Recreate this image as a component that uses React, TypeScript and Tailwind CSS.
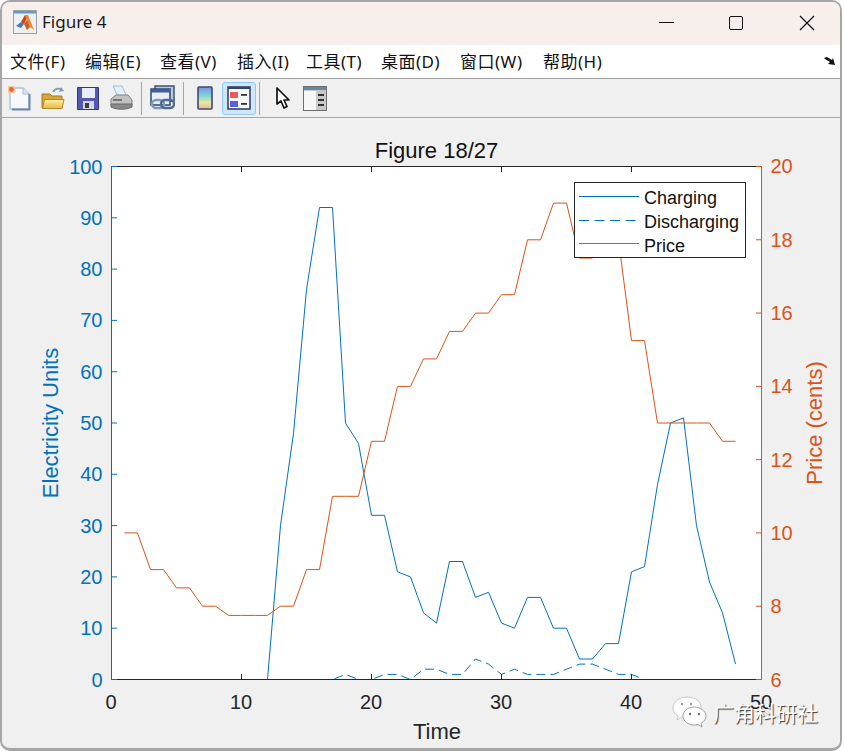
import React from "react";

const chargeVals = [0,0,0,0,0,0,0,0,0,0,0,0,30,48,76,92,92,50,46,32,32,21,20,13,11,23,23,16,17,11,10,16,16,10,10,4,4,7,7,21,22,38,50,51,30,19,13,3];
const dischargeVals = [0,0,0,0,0,0,0,0,0,0,0,0,0,0,0,0,0,1,0,0,1,1,0,2,2,1,1,4,3,1,2,1,1,1,2,3,3,2,1,1,0,0,0,0,0,0,0,0];
const priceVals = [10,10,9,9,8.5,8.5,8,8,7.75,7.75,7.75,7.75,8,8,9,9,11,11,11,12.5,12.5,14,14,14.75,14.75,15.5,15.5,16,16,16.5,16.5,18,18,19,19,17.5,17.5,18,18,15.25,15.25,13,13,13,13,13,12.5,12.5];

const X = (t: number) => 111.5 + t * 13;
const YL = (v: number) => 679.5 - v * 5.13;
const YR = (v: number) => 679.5 - (v - 6) * 36.643;

const line = (vals: number[], y: (v: number) => number) =>
  vals.map((v, i) => `${X(i + 1).toFixed(1)},${y(v).toFixed(1)}`).join(" ");

const BLUE = "#0072BD";
const ORANGE = "#D95319";
const DARK = "#262626";

function Chart() {
  const xt = [0, 10, 20, 30, 40, 50];
  const yl = [0, 10, 20, 30, 40, 50, 60, 70, 80, 90, 100];
  const yr = [6, 8, 10, 12, 14, 16, 18, 20];
  return (
    <svg
      viewBox="2 118 838 630"
      width="838"
      height="630"
      className="block [font-family:'Liberation_Sans',Arial,sans-serif]"
    >
      <rect x="111.5" y="166.5" width="650" height="513" fill="#ffffff" />
      <polyline points={line(chargeVals, YL)} fill="none" stroke={BLUE} strokeWidth="1" strokeLinejoin="round" />
      <polyline points={line(dischargeVals, YL)} fill="none" stroke={BLUE} strokeWidth="1" strokeDasharray="9 5" />
      <polyline points={line(priceVals, YR)} fill="none" stroke={ORANGE} strokeWidth="1" strokeLinejoin="round" />

      <line x1="111.5" y1="166.5" x2="761.5" y2="166.5" stroke={DARK} />
      <line x1="111.5" y1="679.5" x2="761.5" y2="679.5" stroke={DARK} />
      {xt.map((t) => (
        <g key={t}>
          <line x1={X(t)} y1="679.5" x2={X(t)} y2="674" stroke={DARK} />
          <line x1={X(t)} y1="166.5" x2={X(t)} y2="172" stroke={DARK} />
          <text x={X(t) - 0.5} y="709" textAnchor="middle" fontSize="20" fill={DARK}>{t}</text>
        </g>
      ))}
      <line x1="111.5" y1="166" x2="111.5" y2="680" stroke={BLUE} />
      {yl.map((v) => (
        <g key={v}>
          <line x1="111.5" y1={YL(v)} x2="117" y2={YL(v)} stroke={BLUE} />
          <text x="102.5" y={YL(v) + 7} textAnchor="end" fontSize="20" fill={BLUE}>{v}</text>
        </g>
      ))}
      <line x1="761.5" y1="166" x2="761.5" y2="680" stroke={ORANGE} />
      {yr.map((v) => (
        <g key={v}>
          <line x1="756" y1={YR(v)} x2="761.5" y2={YR(v)} stroke={ORANGE} />
          <text x="770.5" y={YR(v) + 7} fontSize="20" fill={ORANGE}>{v}</text>
        </g>
      ))}

      <text x="436.5" y="157.5" textAnchor="middle" fontSize="22" fill="#111">Figure 18/27</text>
      <text x="437" y="739" textAnchor="middle" fontSize="22" fill={DARK}>Time</text>
      <text transform="translate(58 423) rotate(-90)" textAnchor="middle" fontSize="22" fill={BLUE}>Electricity Units</text>
      <text transform="translate(822 423) rotate(-90)" textAnchor="middle" fontSize="22" fill={ORANGE}>Price (cents)</text>

      <rect x="574.5" y="182.5" width="171" height="75" fill="#fff" stroke={DARK} />
      <line x1="579" y1="196.5" x2="639" y2="196.5" stroke={BLUE} />
      <line x1="579" y1="220.5" x2="639" y2="220.5" stroke={BLUE} strokeDasharray="10 5.5" />
      <line x1="579" y1="243.5" x2="639" y2="243.5" stroke={ORANGE} />
      <text x="644" y="204" fontSize="18" fill="#111">Charging</text>
      <text x="644" y="228" fontSize="18" fill="#111">Discharging</text>
      <text x="644" y="252" fontSize="18" fill="#111">Price</text>
    </svg>
  );
}

function AppIcon() {
  return (
    <svg width="24" height="24" viewBox="0 0 24 24" className="shrink-0">
      <rect x="0.5" y="0.5" width="23" height="23" fill="#eef1f4" stroke="#9aa0a6" />
      <rect x="1" y="1" width="22" height="2.5" fill="#5f9ccc" />
      <polygon points="3,16 8,12 11,14 8,18" fill="#3d7fc4" />
      <polygon points="8,12 12,5 14,8 11,14" fill="#c8421c" />
      <polygon points="12,5 15,5 21,20 17,17 14,11" fill="#ef8a2a" />
      <polygon points="11,14 14,10 17,17 14,20" fill="#d65a1e" />
    </svg>
  );
}

function NewIcon() {
  return (
    <svg width="24" height="26" viewBox="0 0 24 26" className="shrink-0">
      <path d="M3 3h13l6 6v15H3z" fill="#f6faff" stroke="#a9c0de" strokeWidth="1.4" />
      <path d="M16 3v6h6" fill="#d8e6f6" stroke="#a9bcd4" />
      <path d="M22.500 9v15.500H5" fill="none" stroke="#6f86ab" strokeWidth="2" />
      <rect x="1" y="1" width="7" height="7" fill="#f6c69a" />
      <circle cx="4.500" cy="4.500" r="2.400" fill="#e8663c" />
    </svg>
  );
}

function OpenIcon() {
  return (
    <svg width="24" height="26" viewBox="0 0 24 26" className="shrink-0">
      <defs>
        <linearGradient id="fold" x1="0" y1="0" x2="0" y2="1">
          <stop offset="0" stopColor="#fff0a0" />
          <stop offset="1" stopColor="#e8b848" />
        </linearGradient>
      </defs>
      <path d="M12 7c2-4 6-4 9-2" fill="none" stroke="#7f9bb5" strokeWidth="1.800" />
      <path d="M20 2l3 4-5 1z" fill="#7f9bb5" />
      <path d="M1 23V9h8l2 2h10v12z" fill="#d8a53b" stroke="#a27a24" />
      <path d="M1.500 23.500l2-9h19.500l-2 9z" fill="url(#fold)" stroke="#b08a2c" />
    </svg>
  );
}

function SaveIcon() {
  return (
    <svg width="24" height="26" viewBox="0 0 24 26" className="shrink-0">
      <path d="M1.500 2.500h21v22h-21z" fill="#5358b4" stroke="#33387e" />
      <rect x="6" y="3" width="13" height="10" fill="#e8ebf8" />
      <rect x="7" y="16" width="11" height="8" fill="#d8d8e4" />
      <rect x="9" y="18" width="4" height="5" fill="#3a3a4a" />
    </svg>
  );
}

function PrintIcon() {
  return (
    <svg width="23" height="26" viewBox="0 0 23 26" className="shrink-0">
      <path d="M3 1h9l5 11H8z" fill="#e4eef8" stroke="#a8bccc" />
      <path d="M1 14l5-4h12l4 5v5H1z" fill="#c2c2c2" stroke="#808080" />
      <path d="M1 19h21v3c-6 3-15 3-21 0z" fill="#8a8a8a" stroke="#666" />
      <rect x="3" y="14" width="9" height="2" fill="#777" />
    </svg>
  );
}

function LinkIcon() {
  return (
    <svg width="25" height="26" viewBox="0 0 25 26" className="shrink-0">
      <rect x="5" y="1" width="19" height="15" fill="#b9cbe2" stroke="#3f5375" strokeWidth="1.500" />
      <rect x="1" y="4" width="19" height="16" fill="#e6eef8" stroke="#2f4570" strokeWidth="1.500" />
      <rect x="1" y="4" width="19" height="3.500" fill="#3f5f94" />
      <rect x="2" y="15" width="12" height="8" rx="4" fill="none" stroke="#7f9ab8" strokeWidth="2.400" />
      <rect x="11" y="15" width="13" height="8" rx="4" fill="none" stroke="#4d6a90" strokeWidth="2.400" />
    </svg>
  );
}

function ColorbarIcon() {
  return (
    <svg width="16" height="24" viewBox="0 0 16 24" className="shrink-0">
      <defs>
        <linearGradient id="cb" x1="0" y1="0" x2="0" y2="1">
          <stop offset="0" stopColor="#7f8fe0" />
          <stop offset="0.4" stopColor="#80d4dc" />
          <stop offset="0.7" stopColor="#e4e8a0" />
          <stop offset="1" stopColor="#f2b890" />
        </linearGradient>
      </defs>
      <rect x="1" y="1" width="14" height="22" rx="1" fill="url(#cb)" stroke="#3c4a78" strokeWidth="1.600" />
    </svg>
  );
}

function LegendIcon() {
  return (
    <svg width="24" height="24" viewBox="0 0 24 24" className="shrink-0">
      <rect x="1" y="1" width="22" height="22" fill="#f6f7fa" stroke="#34426e" strokeWidth="1.600" />
      <rect x="1" y="1" width="22" height="2" fill="#34426e" />
      <rect x="3" y="6" width="8" height="6" fill="#e85a5e" />
      <rect x="3" y="15" width="8" height="6" fill="#5a5fe0" />
      <rect x="14" y="8" width="6" height="1.800" fill="#333" />
      <rect x="14" y="17" width="6" height="1.800" fill="#333" />
    </svg>
  );
}

function ArrowIcon() {
  return (
    <svg width="14" height="23" viewBox="0 0 14 23" className="shrink-0">
      <path d="M1 1v16l4-3 3 7 3-1.500-3-6.500h5z" fill="#fff" stroke="#111" strokeWidth="1.700" strokeLinejoin="round" />
    </svg>
  );
}

function BrowserIcon() {
  return (
    <svg width="24" height="25" viewBox="0 0 24 25" className="shrink-0">
      <rect x="0.500" y="0.500" width="23" height="24" fill="#c9c9c9" stroke="#6e6e6e" />
      <rect x="1" y="1" width="22" height="3" fill="#5f8aa8" />
      <rect x="1" y="5" width="12" height="19" fill="#f7f7f7" />
      <rect x="15" y="8" width="6" height="2" fill="#333" />
      <rect x="15" y="13" width="6" height="2" fill="#333" />
      <rect x="15" y="18" width="6" height="2" fill="#333" />
    </svg>
  );
}

function Sep() {
  return <div className="h-[33px] w-px bg-[#a6a6a6] shrink-0" />;
}

function Watermark() {
  return (
    <div className="absolute left-[669px] top-[578px] flex items-center">
      <svg width="36" height="32" viewBox="0 0 36 32" className="shrink-0">
        <path d="M16 1C8 1 2 6 2 12c0 4 2 6 5 8l-1 4 5-3c2 .6 4 .6 5 .6C24 21.600 30 17 30 11 30 5 24 1 16 1z" fill="#ffffff" stroke="#bdbdbd" strokeWidth="0.800" />
        <path d="M23 11c-6 0-11 4-11 9s5 9 11 9c1.500 0 2.500 0 4-.6l4 2.600-1-3.600c3-2 5-4 5-7.400 0-5-6-9-12-9z" fill="#ffffff" stroke="#8a8a8a" strokeWidth="0.800" />
        <circle cx="11" cy="8" r="1.200" fill="#9a9a9a" />
        <circle cx="20" cy="8" r="1.200" fill="#9a9a9a" />
        <circle cx="19" cy="18" r="1.200" fill="#6a6a6a" />
        <circle cx="28" cy="18" r="1.200" fill="#6a6a6a" />
      </svg>
      <span className="ml-[6px] text-[21px] leading-none whitespace-nowrap text-white [font-family:'Noto_Sans_CJK_SC',sans-serif] [text-shadow:1px_1px_1px_#333]">
        广角科研社
      </span>
    </div>
  );
}

const menus: [string, string][] = [
  ["文件(F)", "w-[75px]"],
  ["编辑(E)", "w-[75px]"],
  ["查看(V)", "w-[77px]"],
  ["插入(I)", "w-[69px]"],
  ["工具(T)", "w-[75px]"],
  ["桌面(D)", "w-[79px]"],
  ["窗口(W)", "w-[83px]"],
  ["帮助(H)", "w-[80px]"],
];

export default function App() {
  return (
    <div className="w-[844px] h-[751px] bg-white overflow-hidden">
      <div className="w-[842px] h-[751px] flex flex-col border-2 border-b-[3px] border-[#a6a6a6] rounded-[10px] overflow-hidden bg-[#f0f0f0] [font-family:'Noto_Sans','Noto_Sans_CJK_SC',sans-serif]">
        <div className="h-[43px] shrink-0 bg-[#f7efec] flex items-center pl-[11px] pb-[3px]">
          <AppIcon />
          <span className="ml-[5px] text-[17px] text-[#1a1a1a]">Figure 4</span>
          <div className="ml-auto flex items-center pr-[25px] pt-[1px]">
            <div className="w-[15px] h-px bg-[#111]" />
            <div className="ml-[55px] w-[14px] h-[14px] border-[1.5px] border-[#111] rounded-[2px]" />
            <svg width="16" height="16" viewBox="0 0 16 16" className="ml-[56px]">
              <path d="M1 1l14 14M15 1L1 15" stroke="#111" strokeWidth="1.200" fill="none" />
            </svg>
          </div>
        </div>

        <div className="h-[34px] shrink-0 bg-white border-b border-[#a0a0a0] flex items-center pl-[8px] text-[17px] tracking-[0.5px] text-[#111]">
          {menus.map(([label, w]) => (
            <span key={label} className={`${w} whitespace-nowrap`}>{label}</span>
          ))}
          <svg width="12" height="9" viewBox="0 0 12 9" className="ml-auto mr-[4px]">
            <path d="M0 1l3-1 5 3 1-2 2 7-7-1 2-2-5-3z" fill="#111" />
          </svg>
        </div>

        <div className="h-[39px] shrink-0 border-b border-[#a6a6a6] flex items-center pl-[5px]">
          <NewIcon />
          <div className="ml-[10px] shrink-0"><OpenIcon /></div>
          <div className="ml-[11px] shrink-0"><SaveIcon /></div>
          <div className="ml-[10px] shrink-0"><PrintIcon /></div>
          <div className="ml-[8px] shrink-0"><Sep /></div>
          <div className="ml-[8px] shrink-0"><LinkIcon /></div>
          <div className="ml-[8px] shrink-0"><Sep /></div>
          <div className="ml-[13px] shrink-0"><ColorbarIcon /></div>
          <div className="ml-[9px] w-[34px] h-[33px] shrink-0 flex items-center justify-center bg-[#cfe6f9] border border-[#90c8f6] rounded-[3px]">
            <LegendIcon />
          </div>
          <div className="ml-[3px] shrink-0"><Sep /></div>
          <div className="ml-[16px] shrink-0"><ArrowIcon /></div>
          <div className="ml-[13px] shrink-0"><BrowserIcon /></div>
        </div>

        <div className="relative flex-1 min-h-0">
          <Chart />
          <Watermark />
        </div>
      </div>
    </div>
  );
}
